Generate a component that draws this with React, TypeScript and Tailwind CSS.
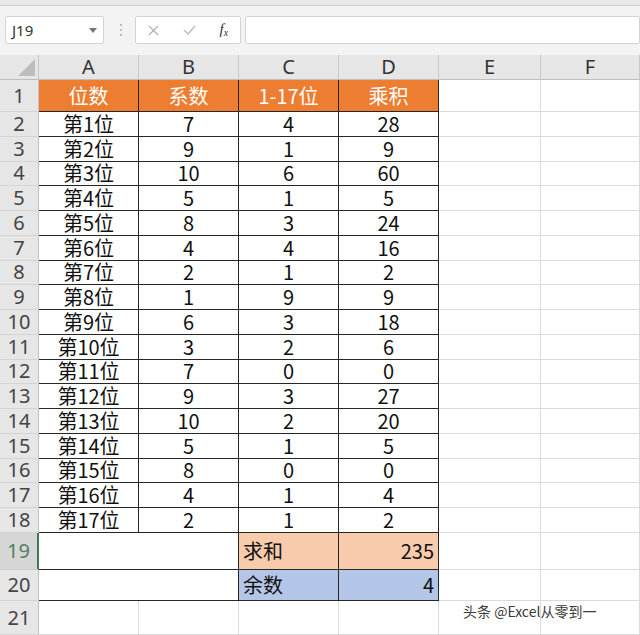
import React from 'react';

const rows: [string, number, number, number][] = [
  ['第1位', 7, 4, 28],
  ['第2位', 9, 1, 9],
  ['第3位', 10, 6, 60],
  ['第4位', 5, 1, 5],
  ['第5位', 8, 3, 24],
  ['第6位', 4, 4, 16],
  ['第7位', 2, 1, 2],
  ['第8位', 1, 9, 9],
  ['第9位', 6, 3, 18],
  ['第10位', 3, 2, 6],
  ['第11位', 7, 0, 0],
  ['第12位', 9, 3, 27],
  ['第13位', 10, 2, 20],
  ['第14位', 5, 1, 5],
  ['第15位', 8, 0, 0],
  ['第16位', 4, 1, 4],
  ['第17位', 2, 1, 2],
];

const letters = ['A', 'B', 'C', 'D', 'E', 'F'];

function RowNum({ n, active }: { n: number; active?: boolean }) {
  return (
    <div
      className={
        active
          ? "flex items-center justify-center bg-[#d6d6d6] border-r-2 border-r-[#3f7a52] border-b border-b-[#cfcfcf] text-[20px] leading-none text-[#4f7f5e] font-['Noto_Sans',sans-serif]"
          : "flex items-center justify-center bg-[#e6e6e6] border-r border-r-[#c4c4c4] border-b border-b-[#d4d4d4] text-[20px] leading-none text-[#444] font-['Noto_Sans',sans-serif]"
      }
    >
      {n}
    </div>
  );
}

function Blank() {
  return <div className="border-r border-b border-[#dadada] bg-white" />;
}

function Cell({ children, className = '' }: { children?: React.ReactNode; className?: string }) {
  return (
    <div className={`flex items-center border-r border-b border-[#262626] text-[20px] leading-none text-[#111] ${className}`}>
      {children}
    </div>
  );
}

export default function App() {
  return (
    <div className="relative w-[640px] h-[635px] overflow-hidden bg-[#f3f3f3] font-['Noto_Sans_CJK_SC',sans-serif]">
      {/* top strip */}
      <div className="h-[6px] bg-[#e8e8e8] border-b border-[#cdcdcd]" />

      {/* formula bar */}
      <div className="h-[49px] flex items-start pt-[10px] pl-[5px]">
        <div className="w-[100px] h-[28px] bg-white border border-[#d4d4d4] rounded-[2px] flex items-center justify-between pl-[6px] pr-[6px]">
          <span className="text-[15px] text-[#333] font-['Noto_Sans',sans-serif]">J19</span>
          <svg width="8" height="5" viewBox="0 0 8 5">
            <path d="M0 0 L8 0 L4 5 Z" fill="#777" />
          </svg>
        </div>
        <div className="w-[31px] h-[28px] flex flex-col items-center justify-center gap-[3px] pl-[4px]">
          <span className="w-[2px] h-[2px] bg-[#a8a8a8] rounded-full" />
          <span className="w-[2px] h-[2px] bg-[#a8a8a8] rounded-full" />
          <span className="w-[2px] h-[2px] bg-[#a8a8a8] rounded-full" />
        </div>
        <div className="w-[108px] h-[28px] bg-white border border-[#d4d4d4] rounded-[2px] flex items-center justify-around">
          <svg width="11" height="11" viewBox="0 0 11 11">
            <path d="M1 1 L10 10 M10 1 L1 10" stroke="#b0b0b0" strokeWidth="1.2" />
          </svg>
          <svg width="13" height="10" viewBox="0 0 13 10">
            <path d="M1 5 L5 9 L12 1" stroke="#b8b8b8" strokeWidth="1.4" fill="none" />
          </svg>
          <span className="italic text-[15px] text-[#333] font-['Liberation_Serif',serif] leading-none">
            f<span className="text-[10px] align-[-2px]">x</span>
          </span>
        </div>
        <div className="ml-[4px] w-[400px] h-[28px] bg-white border border-[#d4d4d4] rounded-[2px]" />
      </div>

      {/* sheet */}
      <div className="grid grid-cols-[39px_100px_100px_100px_100px_102px_99px] grid-rows-[25px_32px_repeat(17,24.75px)_37.25px_31px_34px] bg-white">
        {/* column headers */}
        <div className="relative bg-[#e6e6e6] border-r border-r-[#c4c4c4] border-b border-b-[#bdbdbd]">
          <svg className="absolute right-[3px] bottom-[3px]" width="17" height="17" viewBox="0 0 17 17">
            <path d="M17 0 L17 17 L0 17 Z" fill="#bdbdbd" />
          </svg>
        </div>
        {letters.map((l) => (
          <div
            key={l}
            className="flex items-center justify-center bg-[#e6e6e6] border-r border-r-[#c8c8c8] border-b border-b-[#bdbdbd] text-[20px] leading-none text-[#333] font-['Noto_Sans',sans-serif]"
          >
            {l}
          </div>
        ))}

        {/* row 1 */}
        <RowNum n={1} />
        {['位数', '系数', '1-17位', '乘积'].map((h) => (
          <Cell key={h} className="justify-center bg-[#ed7d31] text-white">
            {h}
          </Cell>
        ))}
        <Blank />
        <Blank />

        {/* rows 2-18 */}
        {rows.map((r, i) => (
          <React.Fragment key={r[0]}>
            <RowNum n={i + 2} />
            {r.map((v, j) => (
              <Cell key={j} className="justify-center bg-white">
                {v}
              </Cell>
            ))}
            <Blank />
            <Blank />
          </React.Fragment>
        ))}

        {/* row 19 */}
        <RowNum n={19} active />
        <Cell className="col-span-2 bg-white" />
        <Cell className="bg-[#f8cbad] pl-[4px]">求和</Cell>
        <Cell className="bg-[#f8cbad] justify-end pr-[4px]">235</Cell>
        <Blank />
        <Blank />

        {/* row 20 */}
        <RowNum n={20} />
        <Cell className="col-span-2 bg-white" />
        <Cell className="bg-[#b4c6e7] pl-[4px]">余数</Cell>
        <Cell className="bg-[#b4c6e7] justify-end pr-[4px]">4</Cell>
        <Blank />
        <Blank />

        {/* row 21 */}
        <RowNum n={21} />
        {letters.map((l) => (
          <Blank key={l} />
        ))}
      </div>

      {/* watermark */}
      <div className="absolute left-[463px] top-[601px] text-[14px] text-[#3a3a3a] whitespace-nowrap [text-shadow:0_0_2px_#fff,0_0_2px_#fff] font-['Noto_Sans_CJK_SC',sans-serif]">
        头条 @Excel从零到一
      </div>
    </div>
  );
}
